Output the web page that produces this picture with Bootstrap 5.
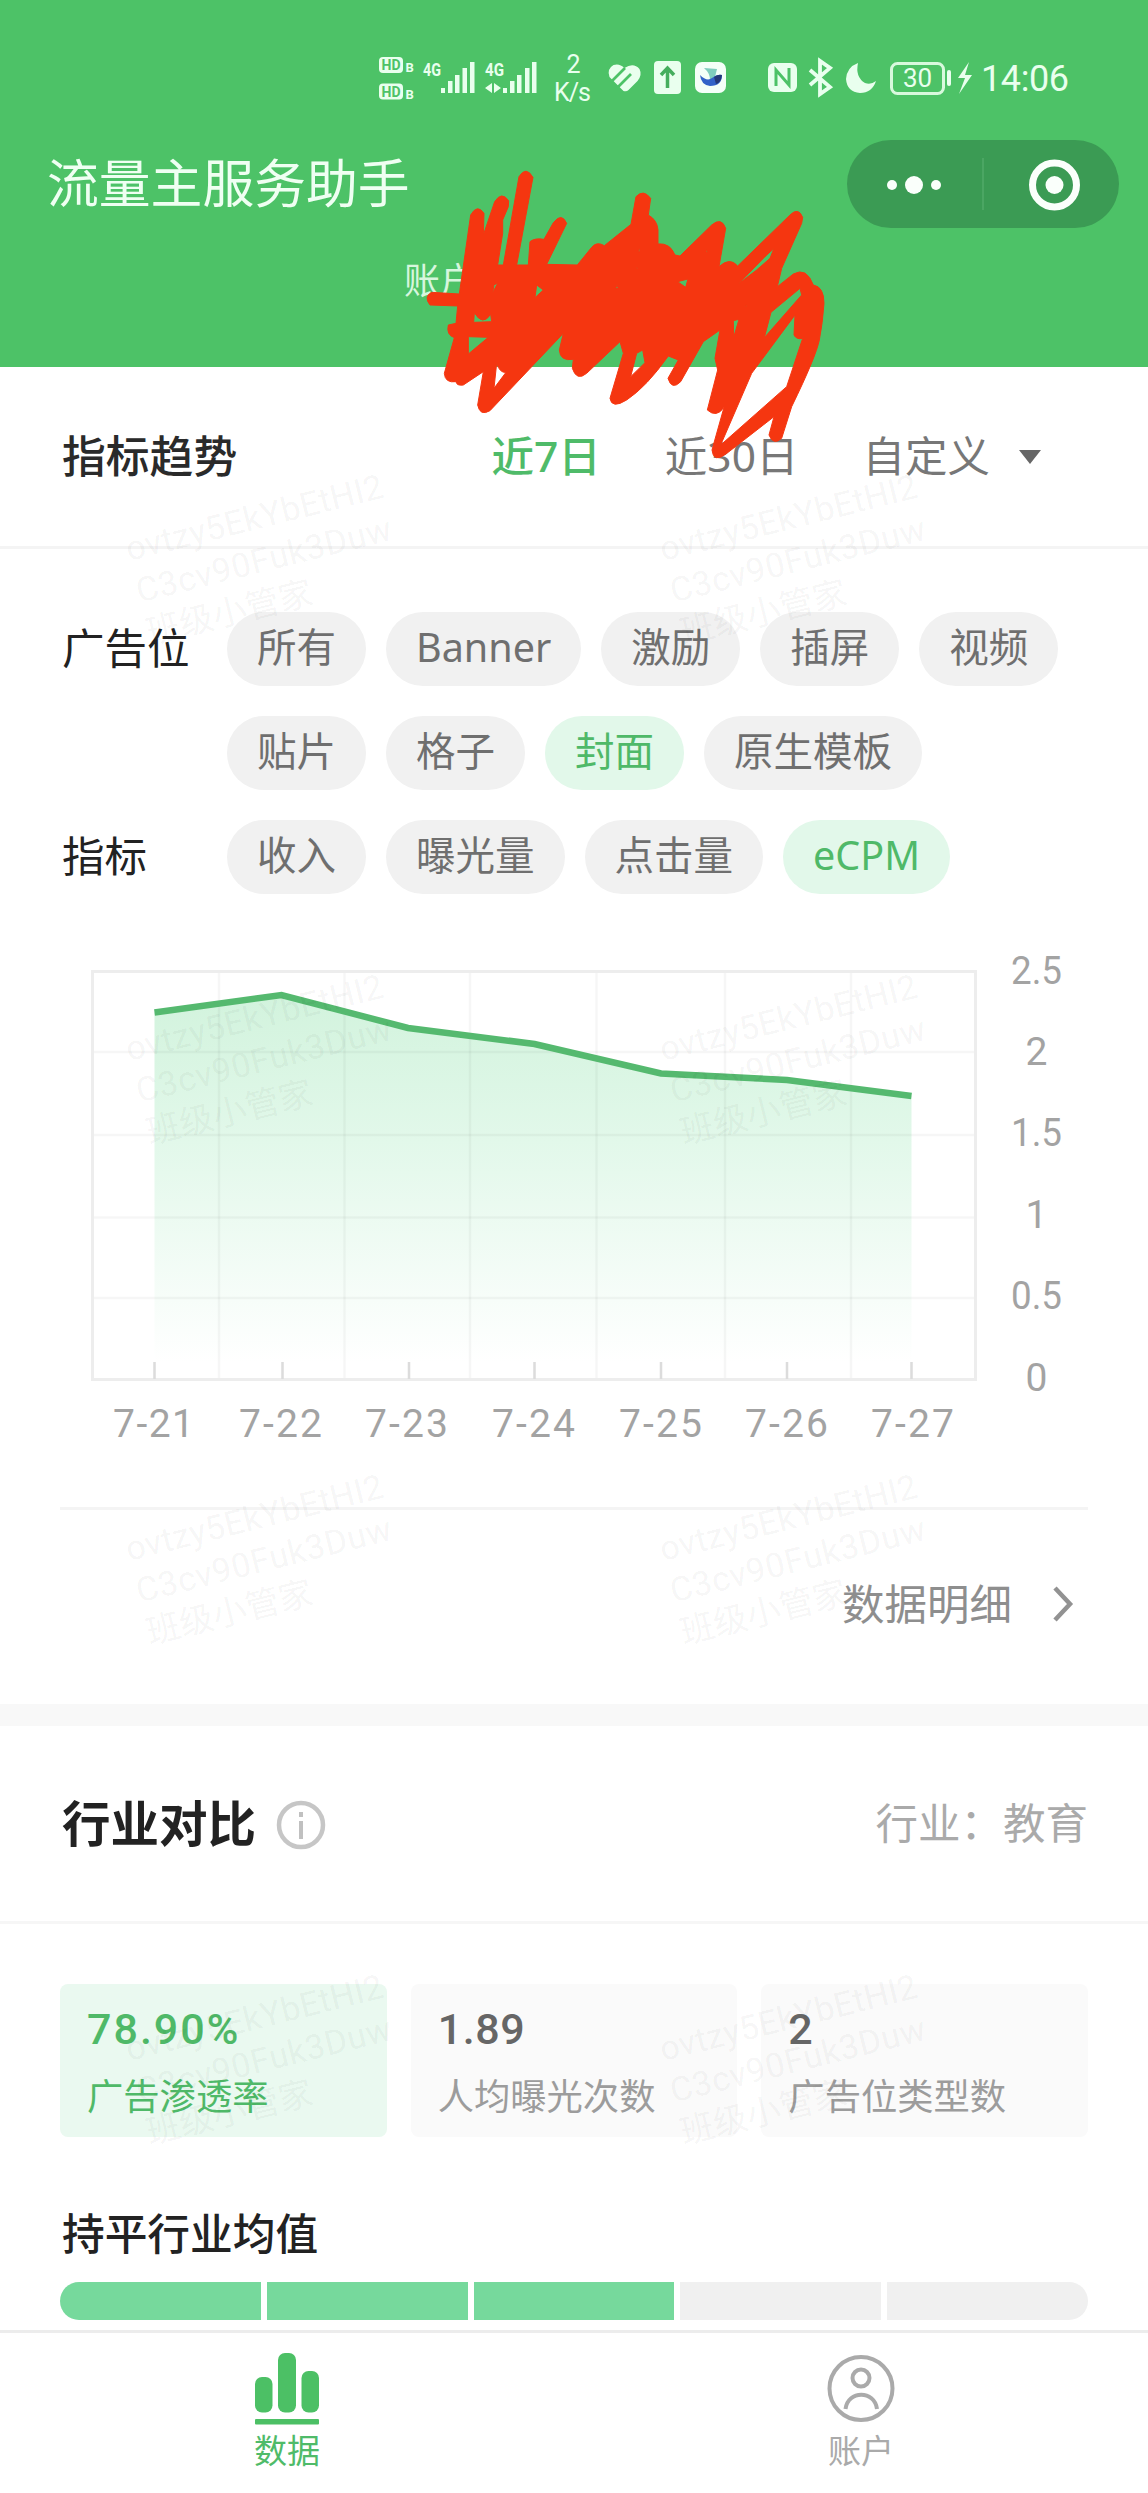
<!DOCTYPE html>
<html lang="zh-CN">
<head>
<meta charset="utf-8">
<meta name="viewport" content="width=device-width, initial-scale=1">
<title>流量主服务助手</title>
<link href="https://cdn.jsdelivr.net/npm/bootstrap@5.3.0/dist/css/bootstrap.min.css" rel="stylesheet">
<style>
  body { font-family: "Noto Sans", "Noto Sans CJK SC", sans-serif; line-height: 1; color: #222; background: #fff; }
  svg { display: block; }
  svg text { font-family: Roboto, "Noto Sans CJK SC", sans-serif; }
  .app { width: 1148px; height: 2493px; }
  .top { height: 367px; background: #4dc267; }
  .status { height: 125px; }
  .titlebar { height: 118px; padding: 0 29px 0 47px; }
  .title-text { font-size: 51.8px; color: #effff2; }
  .capsule { width: 272px; height: 88px; background: #3b9b54; }
  .account { height: 76px; padding-left: 404px; font-size: 36px; color: #d7f6dd; }
  .trend-head { height: 182px; padding: 0 106px 0 62px; border-bottom: 3px solid #f4f4f4; font-size: 42.5px; color: #777; }
  .trend-title { font-size: 43.8px; font-weight: 500; color: #2a2a2a; }
  .range { gap: 64px; }
  .caret { margin-left: 28px; }
  .green { color: #4fbb69; }
  .filters { padding: 63px 60px 0 62px; }
  .filter-row { min-height: 74px; margin-bottom: 30px; }
  .filter-name { width: 165px; font-size: 42.5px; line-height: 71px; color: #222; }
  .chips { gap: 30px 20px; }
  .chip { height: 74px; padding: 0 30px; font-size: 39.5px; line-height: 71px; color: #6f6f6f; background: #f1f1f1; border-radius: 37px; }
  .chip.active { color: #4fb968; background: #e2f8ea; }
  .chart { height: 592px; margin-top: -9px; }
  .more { height: 197px; margin: 0 60px; padding: 0 14px 6px 0; border-top: 3px solid #f4f4f4; font-size: 42.5px; color: #8e8e8e; }
  .band { height: 22px; background: #f8f8f8; }
  .industry-head { height: 198px; padding: 0 60px 0 62px; border-bottom: 3px solid #f6f6f6; }
  .industry-title { font-size: 48.5px; font-weight: 700; color: #222; }
  .industry-tag { font-size: 42.5px; color: #aaa; }
  .stats { padding: 60px 60px 0; gap: 24px; }
  .stat { flex: 1 1 0; height: 153px; padding: 25px 0 0 27px; background: #fafafa; border-radius: 8px; color: #9c9c9c; }
  .stat-value { height: 41px; font: 500 43px/41px Roboto, sans-serif; letter-spacing: .6px; color: #666; }
  .stat-label { margin-top: 26px; font-size: 36.3px; line-height: 40px; }
  .stat.active { background: #eaf9f0; }
  .stat.active div { color: #4fb968; }
  .stat.active .stat-value { letter-spacing: 2px; }
  .average { height: 145px; padding: 72px 62px 0; font-size: 42.7px; line-height: 50px; font-weight: 500; color: #222; }
  .meter { height: 38px; margin: 0 60px; gap: 6px; border-radius: 19px; overflow: hidden; }
  .meter span { flex: 1; background: #f0f0f0; }
  .meter .on { background: #76d99c; }
  .tabs { height: 163px; margin-top: 10px; border-top: 3px solid #ececec; font-size: 33px; color: #aaa; background: #fff; }
  .tab-item { padding-top: 14px; line-height: 40px; }
  .overlay { left: 0; top: 0; pointer-events: none; }
</style>
</head>
<body>
<div class="app position-relative overflow-hidden d-flex flex-column">

  <header class="top flex-shrink-0">
    <svg class="status" width="1148" height="125" viewBox="0 0 1148 125" fill="#e9ffee">
      <g id="hd">
        <rect x="379" y="57" width="24" height="16" rx="4"/>
        <text x="381.5" y="70" font-size="14" font-weight="700" fill="#4dc267" textLength="19" lengthAdjust="spacingAndGlyphs">HD</text>
        <text x="405.500" y="72" font-size="13" font-weight="700">B</text>
      </g>
      <use href="#hd" y="26.500"/>
      <text x="423" y="76" font-size="19" font-weight="700" textLength="18" lengthAdjust="spacingAndGlyphs">4G</text>
      <path d="M441 88h4v5h-4zM448 81h4.500v12h-4.500zM455 75h4.500v18h-4.500zM462.500 68h4.500v25h-4.500zM470 62h4.500v31h-4.500z"/>
      <text x="485" y="76" font-size="19" font-weight="700" textLength="19" lengthAdjust="spacingAndGlyphs">4G</text>
      <path d="M503 88h4v5h-4zM510 81h4.500v12h-4.500zM517 75h4.500v18h-4.500zM525 68h4.500v25h-4.500zM532 62h4.500v31h-4.500z"/>
      <path d="M485 88l7-5v10zM501 88l-7-5v10z"/>
      <text x="573.500" y="73" font-size="25" text-anchor="middle">2</text>
      <text x="554" y="101" font-size="25" textLength="37">K/s</text>
      <path d="M624.500 68q-5-5-11-3-7 4-4 12l14 14q3 1 5-1l9-9q5-6 2-12-6-7-15-1z"/>
      <path d="M611 82l14-14M617 88l14-14" stroke="#4dc267" stroke-width="2.800"/>
      <rect x="654" y="61" width="27" height="33" rx="4"/>
      <path d="M667.500 88V69M661 75l6.500-7 6.500 7" fill="none" stroke="#45ae5d" stroke-width="3.500"/>
      <rect x="695" y="62" width="31" height="31" rx="7" fill="#f4fff8"/>
      <path d="M704 68l13 1-2 8-5 3q0-7-6-12z" fill="#7fcdbd"/>
      <path d="M700 75q7 7 12 3 5-4 10-3 0 11-12 11-9-1-10-11z" fill="#3262c8"/>
      <path d="M714 77q4-3 8-2-1 8-6 9z" fill="#243878"/>
      <rect x="768" y="63" width="29" height="29" rx="6"/>
      <path d="M776 86V70l13 15V68" fill="none" stroke="#4dc267" stroke-width="3"/>
      <path d="M810 70l20 17-10 7V61l10 7-20 17" fill="none" stroke="#e9ffee" stroke-width="3.800"/>
      <path d="M858 63q-3 14 7 20 6 2 11-2-4 12-16 12-13-1-14-14 1-12 12-16z"/>
      <rect x="891.500" y="63.500" width="52" height="30" rx="6" fill="none" stroke="#d8f9dd" stroke-width="3"/>
      <text x="917.500" y="87" font-size="26" text-anchor="middle">30</text>
      <rect x="947" y="70" width="4" height="16" rx="2"/>
      <path d="M969 62l-11 16h7l-6 16 13-19h-7z"/>
      <text x="981" y="91" font-size="36" textLength="88">14:06</text>
    </svg>
    <div class="titlebar d-flex justify-content-between align-items-center">
      <div class="title-text">流量主服务助手</div>
      <svg class="capsule rounded-pill" viewBox="0 0 272 88" fill="#fafffb">
        <circle cx="45" cy="45" r="5"/><circle cx="67" cy="45" r="9"/><circle cx="89" cy="45" r="5"/>
        <path d="M136 18v52" stroke="#4ba663" stroke-width="2"/>
        <circle cx="207.500" cy="45" r="22" fill="none" stroke="#fafffb" stroke-width="7"/>
        <circle cx="207.500" cy="45" r="9"/>
      </svg>
    </div>
    <div class="account d-flex align-items-center">账户</div>
  </header>

  <section class="trend-head d-flex justify-content-between align-items-center flex-shrink-0">
    <div class="trend-title">指标趋势</div>
    <div class="range d-flex align-items-center">
      <span class="green fw-medium">近7日</span>
      <span>近30日</span>
      <span class="d-flex align-items-center">自定义
        <svg class="caret" width="24" height="16" viewBox="0 0 24 16"><path d="M1 1h22L12 15z" fill="#666"/></svg>
      </span>
    </div>
  </section>

  <section class="filters flex-shrink-0">
    <div class="filter-row d-flex">
      <div class="filter-name flex-shrink-0">广告位</div>
      <div class="chips d-flex flex-wrap">
        <span class="chip">所有</span><span class="chip">Banner</span><span class="chip">激励</span><span class="chip">插屏</span><span class="chip">视频</span>
        <span class="chip">贴片</span><span class="chip">格子</span><span class="chip active">封面</span><span class="chip">原生模板</span>
      </div>
    </div>
    <div class="filter-row d-flex">
      <div class="filter-name flex-shrink-0">指标</div>
      <div class="chips d-flex">
        <span class="chip">收入</span><span class="chip">曝光量</span><span class="chip">点击量</span><span class="chip active">eCPM</span>
      </div>
    </div>
  </section>

  <svg class="chart flex-shrink-0" width="1148" height="592" viewBox="0 915 1148 592">
    <defs>
      <linearGradient id="area" x1="0" y1="994" x2="0" y2="1362" gradientUnits="userSpaceOnUse">
        <stop offset="0" stop-color="#d2f3dd"/><stop offset=".4" stop-color="#e2f8ea"/><stop offset="1" stop-color="#fff"/>
      </linearGradient>
    </defs>
    <path d="M154.500 1012.500L281.500 995 408 1028 534.500 1044 661 1073.500 787 1080 911.500 1096V1365H154.500z" fill="url(#area)"/>
    <g fill="none" stroke="#000" stroke-opacity=".035" stroke-width="2.500">
      <path d="M93 1052H976M93 1135H976M93 1217.500H976M93 1298H976"/>
      <path d="M219 971V1379M344.500 971V1379M470 971V1379M596.500 971V1379M725 971V1379M851 971V1379"/>
    </g>
    <rect x="92.500" y="971.500" width="883" height="408" fill="none" stroke="#ededed" stroke-width="3"/>
    <path d="M154.500 1362v17M282.500 1362v17M409 1362v17M534.500 1362v17M661 1362v17M787 1362v17M911.500 1362v17" stroke="#dcdcdc" stroke-width="2.500"/>
    <path d="M154.500 1012.500L281.500 995 408 1028 534.500 1044 661 1073.500 787 1080 911.500 1096" fill="none" stroke="#55b96f" stroke-width="6.500"/>
    <g font-size="39" fill="#a3a3a3">
      <text x="1011" y="984" textLength="51" lengthAdjust="spacingAndGlyphs">2.5</text>
      <text x="1036.500" y="1065" text-anchor="middle">2</text>
      <text x="1011" y="1146" textLength="51" lengthAdjust="spacingAndGlyphs">1.5</text>
      <text x="1036.500" y="1228" text-anchor="middle">1</text>
      <text x="1011" y="1309" textLength="51" lengthAdjust="spacingAndGlyphs">0.5</text>
      <text x="1036.500" y="1391" text-anchor="middle">0</text>
      <text x="113" y="1437" textLength="81">7-21</text>
      <text x="239" y="1437" textLength="83">7-22</text>
      <text x="365" y="1437" textLength="83">7-23</text>
      <text x="492" y="1437" textLength="83">7-24</text>
      <text x="619" y="1437" textLength="83">7-25</text>
      <text x="745" y="1437" textLength="83">7-26</text>
      <text x="871" y="1437" textLength="83">7-27</text>
    </g>
  </svg>

  <div class="more d-flex justify-content-end align-items-center flex-shrink-0">
    数据明细
    <svg width="62" height="40" viewBox="0 0 62 40"><path d="M43 4l15 16-15 16" fill="none" stroke="#929292" stroke-width="4.500"/></svg>
  </div>
  <div class="band flex-shrink-0"></div>

  <section class="industry-head d-flex justify-content-between align-items-center flex-shrink-0">
    <div class="d-flex align-items-center">
      <span class="industry-title">行业对比</span>
      <svg class="ms-3" width="56" height="52" viewBox="0 0 56 52"><circle cx="29" cy="27" r="22" fill="none" stroke="#c6c6c6" stroke-width="4.500"/><path d="M29 23v18M29 14v5" stroke="#c0c0c0" stroke-width="4"/></svg>
    </div>
    <span class="industry-tag">行业：教育</span>
  </section>

  <section class="stats d-flex flex-shrink-0">
    <div class="stat active"><div class="stat-value">78.90%</div><div class="stat-label">广告渗透率</div></div>
    <div class="stat"><div class="stat-value">1.89</div><div class="stat-label">人均曝光次数</div></div>
    <div class="stat"><div class="stat-value">2</div><div class="stat-label">广告位类型数</div></div>
  </section>
  <div class="average flex-shrink-0">持平行业均值</div>
  <div class="meter d-flex flex-shrink-0"><span class="on"></span><span class="on"></span><span class="on"></span><span></span><span></span></div>

  <nav class="tabs d-flex flex-shrink-0">
    <div class="tab-item w-50 d-flex flex-column align-items-center green">
      <svg width="72" height="84" viewBox="251 2347 72 84" fill="#4cc065">
        <rect x="255" y="2377" width="17.500" height="35.500" rx="7"/><rect x="278" y="2353" width="18" height="59.500" rx="7"/><rect x="301.500" y="2371" width="17.500" height="41.500" rx="7"/>
        <rect x="255" y="2419" width="64" height="5.500" rx="1"/>
      </svg>
      数据
    </div>
    <div class="tab-item w-50 d-flex flex-column align-items-center">
      <svg width="72" height="84" viewBox="825 2347 72 84" fill="none" stroke="#aaa" stroke-width="4">
        <circle cx="861" cy="2388.500" r="31.500"/><circle cx="861" cy="2378" r="8.500"/><path d="M845.500 2409C848 2390 874.500 2390 877 2409"/>
      </svg>
      账户
    </div>
  </nav>

  <svg class="overlay position-absolute" width="1148" height="2493" viewBox="0 0 1148 2493">
    <defs>
      <g id="wm" font-size="34" fill="#000" fill-opacity=".05" transform="rotate(-14)">
        <text x="0" y="0" textLength="264">ovtzy5EkYbEtHI2</text>
        <text x="0" y="43" textLength="262">C3cv90Fuk3Duw</text>
        <text x="0" y="86" textLength="170">班级小管家</text>
      </g>
    </defs>
    <use href="#wm" x="129" y="561"/><use href="#wm" x="663" y="561"/>
    <use href="#wm" x="129" y="1061"/><use href="#wm" x="663" y="1061"/>
    <use href="#wm" x="129" y="1561"/><use href="#wm" x="663" y="1561"/>
    <use href="#wm" x="129" y="2061"/><use href="#wm" x="663" y="2061"/>

    <path transform="translate(420 160) scale(.33333)" fill="#f53610" fill-rule="evenodd" stroke="#f53610" stroke-width="3" stroke-linejoin="round"
      d="M152 165Q172 130 192 160L190 225 224 125Q245 92 266 122L265 140 248 180 248 220 233 315 250 315 297 50Q318 16 339 52L290 315 325 315 330 245Q345 233 372 238L400 188Q425 156 440 190L380 313 472 315 515 262Q530 243 553 257L633 193 648 110Q670 86 692 115L685 165Q712 180 714 210V252Q750 248 765 285L780 288 875 195Q905 170 917 205L897 320Q930 290 953 318L1110 165Q1135 140 1148 172L1145 190 1085 325 1072 380 1120 342Q1160 320 1180 375Q1212 380 1212 430Q1208 490 1198 540Q1188 590 1115 740L1085 835Q1060 858 1047 825L1062 770 918 882Q880 910 876 870L912 742Q890 775 862 750L893 630 885 595 900 510 850 545 782 665Q755 692 744 655L775 600 745 588Q680 680 620 720Q575 748 570 715L610 580 600 545 500 640Q470 665 457 625L460 598Q420 605 418 570L430 520 210 752Q180 770 173 735L190 635 130 675Q110 678 108 665Q75 670 73 640L103 533Q78 525 85 495L108 490 113 438 30 435Q10 410 35 397L118 402z
      M163 458L161 487 215 485 212 463Q188 500 163 458z
      M145 530V582L205 532z
      M230 610L222 685 258 637Q240 640 230 610z
      M650 580L632 650 675 608 668 570z
      M1140 385L1053 457 1033 533 1145 405z
      M1125 465L1122 525Q1130 540 1148 535L1100 680 902 855 995 640z
      M773 365L804 357 797 382z
      M1062 265L1035 290 955 372 1010 330 1050 295z
      M940 482L957 478 941 532z
      M345 413L350 375 370 390z
      M218 398L222 374 233 370z
      M656 275L658 258 660 275zM648 325l4-4 1 5zM587 385l4-10 4 10zM858 277l2-12 2 12zM973 440l6-6v5z"/>
  </svg>
</div>
<script src="https://cdn.jsdelivr.net/npm/bootstrap@5.3.0/dist/js/bootstrap.bundle.min.js"></script>
</body>
</html>
